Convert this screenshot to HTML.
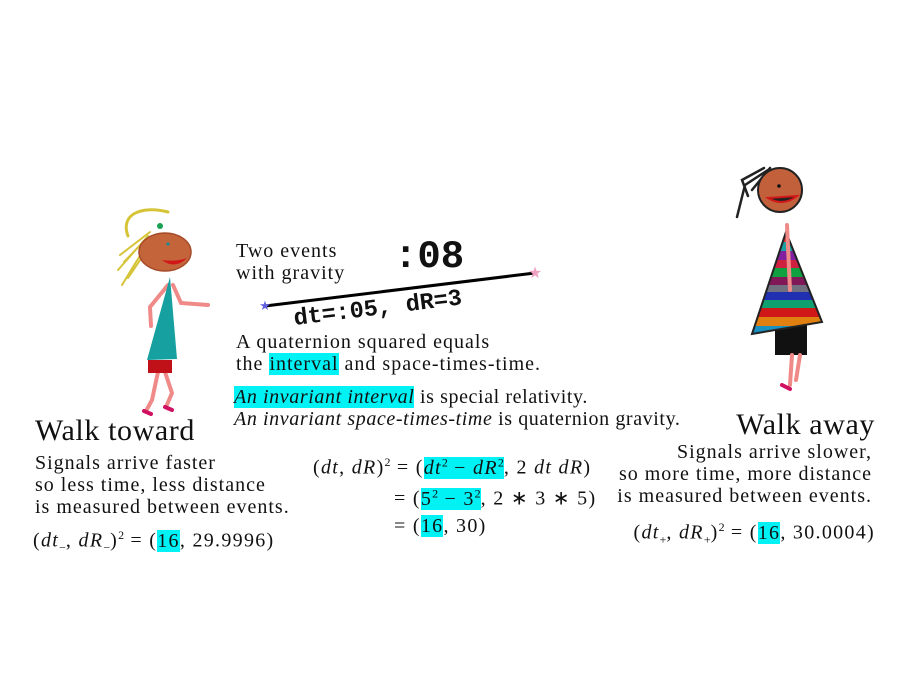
<!DOCTYPE html>
<html><head><meta charset="utf-8"><style>
body{margin:0;width:900px;height:695px;background:#fff;position:relative;overflow:hidden;font-family:"Liberation Serif",serif;color:#111}
.a{position:absolute;white-space:nowrap}
.t{font-size:20px;line-height:22px;letter-spacing:1px}
.e{letter-spacing:1.3px}
.h{background:#00f2f5}
.m{font-family:"Liberation Mono",monospace;font-weight:bold}
sup,sub{font-size:12px;letter-spacing:0}
</style></head><body>

<svg class="a" style="left:0;top:0" width="900" height="695">
<g stroke-linecap="round" fill="none">
<path d="M128 236 C120 215,140 205,168 212" stroke="#d6c438" stroke-width="3"/>
<path d="M150 232 L120 255 M148 236 L118 270 M152 236 L122 285 M155 238 L128 278 M145 240 L124 262" stroke="#d6c438" stroke-width="2"/>
<path d="M168 285 L150 307 L151 326 M173 285 L181 303 L208 305 M158 372 L152 400 L146 411 M165 372 L172 393 L166 407" stroke="#ef8a88" stroke-width="4"/>
</g>
<ellipse cx="165" cy="252" rx="26" ry="19" fill="#c3643a" stroke="#a64a2a" stroke-width="1.5"/>
<path d="M162 260 Q175 270 187 258 Q176 262 162 260Z" fill="#d01818"/>
<circle cx="168" cy="244" r="1.6" fill="#1a8a9a"/>
<circle cx="160" cy="226" r="3" fill="#1aa050"/>
<polygon points="170,277 147,360 177,359" fill="#16a0a0"/>
<rect x="148" y="360" width="24" height="13" fill="#c01018"/>
<path d="M144 411 L151 414 M165 407 L172 410" stroke="#d01060" stroke-width="4" stroke-linecap="round"/>
<g stroke="#222" stroke-width="2.5" fill="none" stroke-linecap="round">
<path d="M768 170 L745 185 L737 217 M764 168 L742 180 L748 196 M770 168 L752 190"/>
</g>
<circle cx="780" cy="190" r="22" fill="#c3603c" stroke="#222" stroke-width="2"/>
<path d="M768 198 Q783 207 797 196 Z" fill="#222" stroke="#d01818" stroke-width="2"/>
<circle cx="779" cy="186" r="1.8" fill="#111"/>
<rect x="775" y="325" width="32" height="30" fill="#111"/>
<defs><clipPath id="dr"><polygon points="786,232 752,334 822,322"/></clipPath></defs>
<g clip-path="url(#dr)">
<rect x="740" y="230" width="90" height="12" fill="#e03030"/>
<rect x="740" y="242" width="90" height="9" fill="#1aa0a0"/>
<rect x="740" y="251" width="90" height="9" fill="#8020a0"/>
<rect x="740" y="260" width="90" height="8" fill="#d02040"/>
<rect x="740" y="268" width="90" height="9" fill="#10a040"/>
<rect x="740" y="277" width="90" height="8" fill="#801858"/>
<rect x="740" y="285" width="90" height="7" fill="#707080"/>
<rect x="740" y="292" width="90" height="8" fill="#2030b0"/>
<rect x="740" y="300" width="90" height="8" fill="#10a070"/>
<rect x="740" y="308" width="90" height="9" fill="#d01818"/>
<rect x="740" y="317" width="90" height="9" fill="#e08010"/>
<rect x="740" y="326" width="90" height="10" fill="#1890c0"/>
</g>
<polygon points="786,232 752,334 822,322" fill="none" stroke="#222" stroke-width="2"/>
<path d="M787 225 L790 290 M792 355 L790 385 M800 355 L796 380" stroke="#ef8a88" stroke-width="4" stroke-linecap="round"/>
<path d="M782 385 L790 389" stroke="#d01060" stroke-width="4" stroke-linecap="round"/>
<line x1="265" y1="306" x2="535" y2="273" stroke="#000" stroke-width="3"/>
<text x="265" y="310" font-size="13" fill="#6060e0" text-anchor="middle">★</text>
<text x="535" y="278" font-size="16" fill="#f0a0c0" text-anchor="middle">★</text>
</svg>

<div class="a t" style="left:236px;top:240px">Two events<br>with gravity</div>
<div class="a m" style="left:394px;top:235px;font-size:39px">:08</div>
<div class="a m" style="left:294px;top:306px;font-size:23.5px;transform:rotate(-7deg);transform-origin:0 50%">dt=:05, dR=3</div>

<div class="a t" style="left:236px;top:331px">A quaternion squared equals<br>the <span class="h">interval</span> and space-times-time.</div>
<div class="a t" style="left:234px;top:386px;letter-spacing:0.6px"><span class="h"><i>An invariant interval</i></span> is special relativity.<br><i>An invariant space-times-time</i> is quaternion gravity.</div>

<div class="a" style="left:35px;top:414px;font-size:30px;letter-spacing:0.6px">Walk toward</div>
<div class="a t" style="left:35px;top:452px">Signals arrive faster<br>so less time, less distance<br>is measured between events.</div>
<div class="a t e" style="left:33px;top:524px">(<i>dt</i><sub>−</sub>, <i>dR</i><sub>−</sub>)<sup>2</sup> = (<span class="h">16</span>, 29.9996)</div>

<div class="a" style="right:25px;top:408px;font-size:30px;letter-spacing:0.6px">Walk away</div>
<div class="a t" style="right:28px;top:441px;text-align:right">Signals arrive slower,<br>so more time, more distance<br>is measured between events.</div>
<div class="a t e" style="right:25px;top:516px">(<i>dt</i><sub>+</sub>, <i>dR</i><sub>+</sub>)<sup>2</sup> = (<span class="h">16</span>, 30.0004)</div>

<div class="a t e" style="left:313px;top:451px">(<i>dt</i>, <i>dR</i>)<sup>2</sup> = (<span class="h"><i>dt</i><sup>2</sup> − <i>dR</i><sup>2</sup></span>, 2 <i>dt dR</i>)</div>
<div class="a t e" style="left:394px;top:482px">= (<span class="h">5<sup>2</sup> − 3<sup>2</sup></span>, 2 ∗ 3 ∗ 5)</div>
<div class="a t e" style="left:394px;top:515px">= (<span class="h">16</span>, 30)</div>
</body></html>
